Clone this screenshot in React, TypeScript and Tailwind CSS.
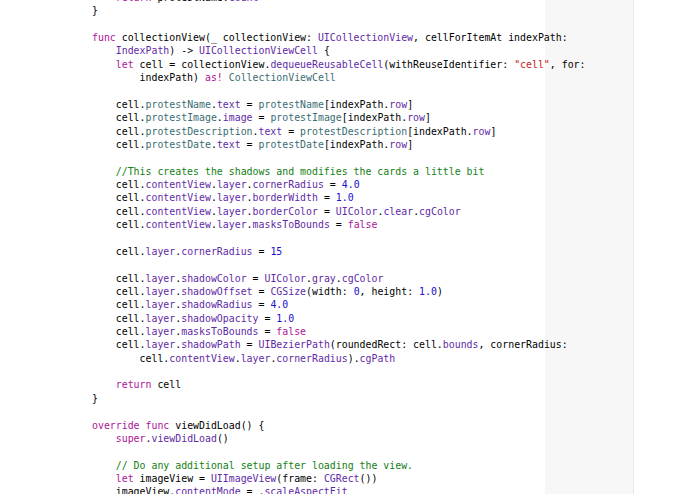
const tone: Record<string, string> = {
  k: "text-[#ad1497]",
  t: "text-[#5f2aa6]",
  p: "text-[#3a6c72]",
  n: "text-[#2010cf]",
  s: "text-[#c81a16]",
  c: "text-[#128012]",
};

// «x:...» marks a coloured run, everything else is plain text
const source = [
  "    «k:return» protestName.«t:count»",
  "}",
  "",
  "«k:func» collectionView(_ collectionView: «t:UICollectionView», cellForItemAt indexPath:",
  "    «t:IndexPath») -> «t:UICollectionViewCell» {",
  '    «k:let» cell = collectionView.«t:dequeueReusableCell»(withReuseIdentifier: «s:"cell"», for:',
  "        indexPath) «k:as!» «p:CollectionViewCell»",
  "",
  "    cell.«p:protestName».«t:text» = «p:protestName»[indexPath.«t:row»]",
  "    cell.«p:protestImage».«t:image» = «p:protestImage»[indexPath.«t:row»]",
  "    cell.«p:protestDescription».«t:text» = «p:protestDescription»[indexPath.«t:row»]",
  "    cell.«p:protestDate».«t:text» = «p:protestDate»[indexPath.«t:row»]",
  "",
  "    «c://This creates the shadows and modifies the cards a little bit»",
  "    cell.«t:contentView».«t:layer».«t:cornerRadius» = «n:4.0»",
  "    cell.«t:contentView».«t:layer».«t:borderWidth» = «n:1.0»",
  "    cell.«t:contentView».«t:layer».«t:borderColor» = «t:UIColor».«t:clear».«t:cgColor»",
  "    cell.«t:contentView».«t:layer».«t:masksToBounds» = «k:false»",
  "",
  "    cell.«t:layer».«t:cornerRadius» = «n:15»",
  "",
  "    cell.«t:layer».«t:shadowColor» = «t:UIColor».«t:gray».«t:cgColor»",
  "    cell.«t:layer».«t:shadowOffset» = «t:CGSize»(width: «n:0», height: «n:1.0»)",
  "    cell.«t:layer».«t:shadowRadius» = «n:4.0»",
  "    cell.«t:layer».«t:shadowOpacity» = «n:1.0»",
  "    cell.«t:layer».«t:masksToBounds» = «k:false»",
  "    cell.«t:layer».«t:shadowPath» = «t:UIBezierPath»(roundedRect: cell.«t:bounds», cornerRadius:",
  "        cell.«t:contentView».«t:layer».«t:cornerRadius»).«t:cgPath»",
  "",
  "    «k:return» cell",
  "}",
  "",
  "«k:override» «k:func» viewDidLoad() {",
  "    «k:super».«t:viewDidLoad»()",
  "",
  "    «c:// Do any additional setup after loading the view.»",
  "    «k:let» imageView = «t:UIImageView»(frame: «t:CGRect»())",
  "    imageView.«t:contentMode» = .«t:scaleAspectFit»",
];

function CodeLine({ text }: { text: string }) {
  const parts: { cls: string; s: string }[] = [];
  const re = /«(\w):([^»]*)»/g;
  let last = 0;
  let m: RegExpExecArray | null;
  while ((m = re.exec(text))) {
    if (m.index > last) parts.push({ cls: "", s: text.slice(last, m.index) });
    parts.push({ cls: tone[m[1]], s: m[2] });
    last = m.index + m[0].length;
  }
  if (last < text.length) parts.push({ cls: "", s: text.slice(last) });

  return (
    <div className="h-[13.36px] whitespace-pre">
      {parts.map((p, i) => (
        <span key={i} className={p.cls}>
          {p.s}
        </span>
      ))}
      {text === "" && " "}
    </div>
  );
}

export default function App() {
  return (
    <div className="relative h-[494px] w-[695px] overflow-hidden bg-white">
      {/* page guide column */}
      <div className="absolute inset-y-0 left-[545px] w-[89px] border-r border-r-[#e8e8e8] bg-[#f7f7f7]" />

      <div className="relative mt-[-9px] pl-[92px] font-['DejaVu_Sans_Mono','Liberation_Mono',monospace] text-[9.88px] leading-[13.36px] text-[#000]">
        {source.map((line, i) => (
          <CodeLine key={i} text={line} />
        ))}
      </div>
    </div>
  );
}
